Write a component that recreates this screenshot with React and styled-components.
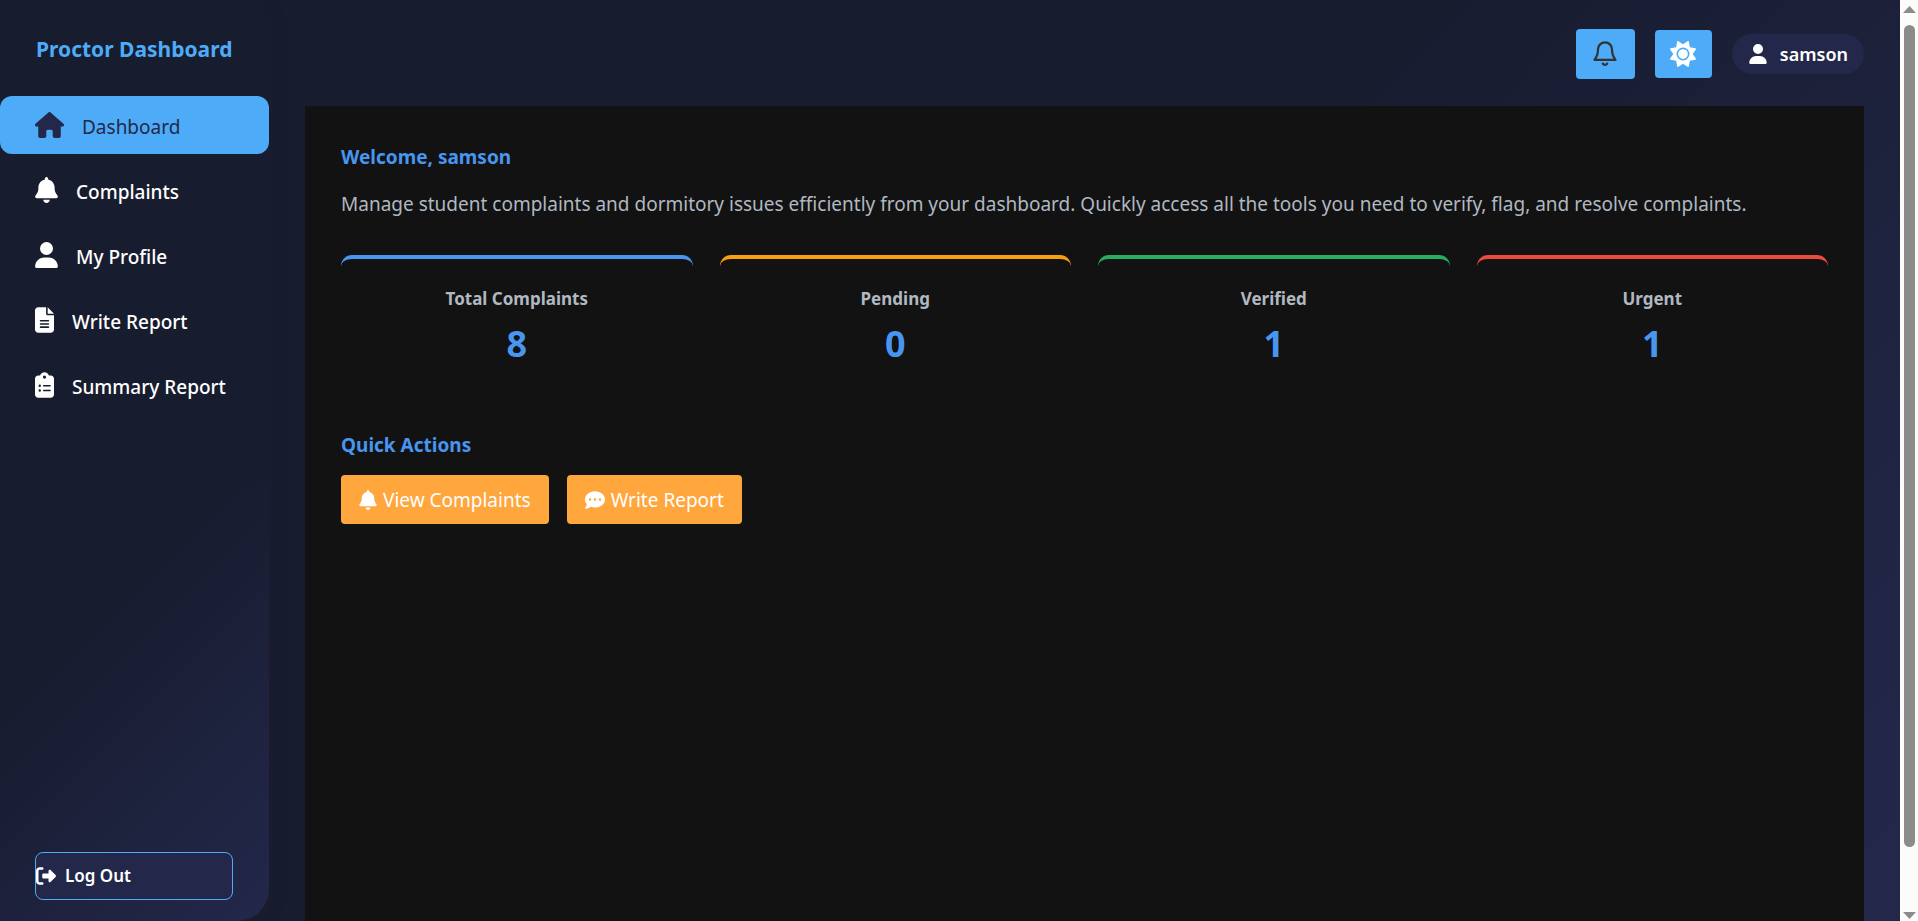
import React from "react";
import styled, { createGlobalStyle } from "styled-components";
import { FaHouse, FaBell, FaUser, FaFileLines, FaClipboardList, FaCommentDots, FaSun, FaRightFromBracket } from "react-icons/fa6";

const Global = createGlobalStyle`
  *, *::before, *::after { box-sizing: border-box; }
  body {
    margin: 0;
    font-family: "Segoe UI", "Noto Sans", "Open Sans", sans-serif;
    color: #ffffff;
    background: #1a1f2e;
  }
  h1, h2, h3, p, ul { margin: 0; padding: 0; }
`;

const Shell = styled.div`
  display: flex;
  height: 100vh;
  overflow: hidden;
  background: linear-gradient(135deg, #181c2f 0%, #181c2f 50%, #23284b 96%);
`;

const Sidebar = styled.aside`
  display: flex;
  flex-direction: column;
  flex: none;
  width: 269px;
  padding: 35px 0 21px;
  border-radius: 0 32px 32px 0;
  background: linear-gradient(135deg, #181c2f 60%, #23284b 100%);
  box-shadow: 2px 0 14px rgba(31, 28, 46, 0.6);
`;

const Brand = styled.h1`
  padding: 0 36px;
  font-size: 21px;
  line-height: 28px;
  color: #4dabf7;
  white-space: nowrap;
`;

const Nav = styled.nav`
  display: flex;
  flex-direction: column;
  gap: 7px;
  margin-top: 33px;
`;

const NavLink = styled.a`
  display: flex;
  align-items: center;
  gap: 18px;
  height: 58px;
  padding: 0 35px;
  border-radius: 12px;
  font-size: 19px;
  font-weight: ${(p) => (p.$active ? 400 : 500)};
  line-height: 28px;
  text-decoration: none;
  color: ${(p) => (p.$active ? "#23284b" : "#ffffff")};
  background: ${(p) => (p.$active ? "#4dabf7" : "transparent")};
  svg { flex: none; width: ${(p) => p.$iconWidth}px; height: 26px; }
`;

const NavLabel = styled.span`
  padding-top: 4px;
`;

const LogOut = styled.button`
  display: flex;
  align-items: center;
  gap: 9px;
  height: 48px;
  margin: auto 36px 0 35px;
  padding: 0;
  border: 1px solid #4dabf7;
  border-radius: 8px;
  background: #23284b;
  color: #ffffff;
  font: 600 17px/24px "Segoe UI", "Noto Sans", sans-serif;
  svg { width: 20px; height: 20px; }
`;

const Main = styled.div`
  display: flex;
  flex-direction: column;
  flex: 1;
  min-width: 0;
  padding: 0 36px;
`;

const TopBar = styled.header`
  display: flex;
  align-items: center;
  justify-content: flex-end;
  gap: 20px;
  flex: none;
  height: 106px;
  padding-top: 2px;
`;

const IconButton = styled.button`
  display: flex;
  align-items: center;
  justify-content: center;
  width: ${(p) => p.$width}px;
  height: ${(p) => p.$height}px;
  padding: 0;
  border: 0;
  border-radius: 4px;
  background: #4dabf7;
  color: ${(p) => p.$color};
`;

const UserPill = styled.div`
  display: flex;
  align-items: center;
  gap: 12px;
  height: 40px;
  padding: 0 16px;
  border-radius: 20px;
  background: #23284b;
  font-size: 18px;
  font-weight: 600;
  line-height: 24px;
`;

const Panel = styled.main`
  flex: 1;
  padding: 37px 36px 36px;
  background: #121212;
`;

const Heading = styled.h2`
  font-size: 19px;
  line-height: 28px;
  color: #4896f0;
`;

const Intro = styled.p`
  margin-top: 17px;
  font-size: 19px;
  line-height: 32px;
  color: #b0b8c1;
`;

const Stats = styled.section`
  display: grid;
  grid-template-columns: repeat(4, 1fr);
  gap: 27px;
  margin: 35px 0 39px;
`;

const StatCard = styled.article`
  height: 137px;
  padding-top: 27px;
  border-top: 4px solid ${(p) => p.$accent};
  border-radius: 11px;
  text-align: center;
`;

const StatLabel = styled.h3`
  font-size: 17px;
  line-height: 26px;
  color: #b0b8c1;
`;

const StatValue = styled.p`
  margin-top: 10px;
  font-size: 36px;
  font-weight: 700;
  line-height: 44px;
  color: #4896f0;
`;

const Actions = styled.div`
  display: flex;
  gap: 18px;
  margin-top: 16px;
`;

const ActionButton = styled.button`
  display: flex;
  align-items: center;
  gap: 6px;
  height: 49px;
  padding: 0 18px;
  border: 0;
  border-radius: 4px;
  background: #ffa63d;
  color: #ffffff;
  font: 400 19px/28px "Segoe UI", "Noto Sans", sans-serif;
  svg { flex: none; width: ${(p) => p.$iconWidth}px; height: 20px; }
`;

const ScrollTrack = styled.div`
  display: flex;
  flex-direction: column;
  align-items: center;
  flex: none;
  width: 18px;
  padding: 6px 0 2px;
  background: #fcfcfc;
`;

const ScrollThumb = styled.div`
  width: 11px;
  height: 90%;
  margin: 12px 0 auto;
  border-radius: 6px;
  background: #8b8b8b;
`;

const Arrow = ({ down }) => (
  <svg width="13" height="7" viewBox="0 0 13 7" aria-hidden="true">
    <path d={down ? "M0 0h13L6.500 7z" : "M0 7h13L6.500 0z"} fill="#8b8b8b" />
  </svg>
);

const BellOutline = () => (
  <svg width="28" height="28" viewBox="0 0 24 24" fill="none" stroke="currentColor" strokeWidth="1.9" strokeLinecap="round" strokeLinejoin="round" aria-hidden="true">
    <path d="M18 8A6 6 0 0 0 6 8c0 7-3 8.200-3 9h18c0-.8-3-2-3-9" />
    <path d="M13.900 20.200a2.100 2.100 0 0 1-3.800 0" />
  </svg>
);

const links = [
  ["Dashboard", FaHouse, 29],
  ["Complaints", FaBell, 23],
  ["My Profile", FaUser, 23],
  ["Write Report", FaFileLines, 19],
  ["Summary Report", FaClipboardList, 19],
];

const stats = [
  ["Total Complaints", 8, "#4896f0"],
  ["Pending", 0, "#f99d12"],
  ["Verified", 1, "#28ad60"],
  ["Urgent", 1, "#e94b3c"],
];

export default function App() {
  return (
    <>
      <Global />
      <Shell>
        <Sidebar>
          <Brand>Proctor Dashboard</Brand>
          <Nav>
            {links.map(([label, Icon, iconWidth], i) => (
              <NavLink key={label} href="#" $active={i === 0} $iconWidth={iconWidth}>
                <Icon />
                <NavLabel>{label}</NavLabel>
              </NavLink>
            ))}
          </Nav>
          <LogOut type="button">
            <FaRightFromBracket />
            Log Out
          </LogOut>
        </Sidebar>
        <Main>
          <TopBar>
            <IconButton type="button" aria-label="Notifications" $width={59} $height={50} $color="#333333">
              <BellOutline />
            </IconButton>
            <IconButton type="button" aria-label="Toggle theme" $width={57} $height={48} $color="#ffffff">
              <FaSun size={26} />
            </IconButton>
            <UserPill>
              <FaUser size={20} />
              samson
            </UserPill>
          </TopBar>
          <Panel>
            <Heading>Welcome, samson</Heading>
            <Intro>
              Manage student complaints and dormitory issues efficiently from your dashboard. Quickly access all the
              tools you need to verify, flag, and resolve complaints.
            </Intro>
            <Stats>
              {stats.map(([label, value, accent]) => (
                <StatCard key={label} $accent={accent}>
                  <StatLabel>{label}</StatLabel>
                  <StatValue>{value}</StatValue>
                </StatCard>
              ))}
            </Stats>
            <Heading>Quick Actions</Heading>
            <Actions>
              <ActionButton type="button" $iconWidth={18}>
                <FaBell />
                View Complaints
              </ActionButton>
              <ActionButton type="button" $iconWidth={20}>
                <FaCommentDots />
                Write Report
              </ActionButton>
            </Actions>
          </Panel>
        </Main>
        <ScrollTrack aria-hidden="true">
          <Arrow />
          <ScrollThumb />
          <Arrow down />
        </ScrollTrack>
      </Shell>
    </>
  );
}
